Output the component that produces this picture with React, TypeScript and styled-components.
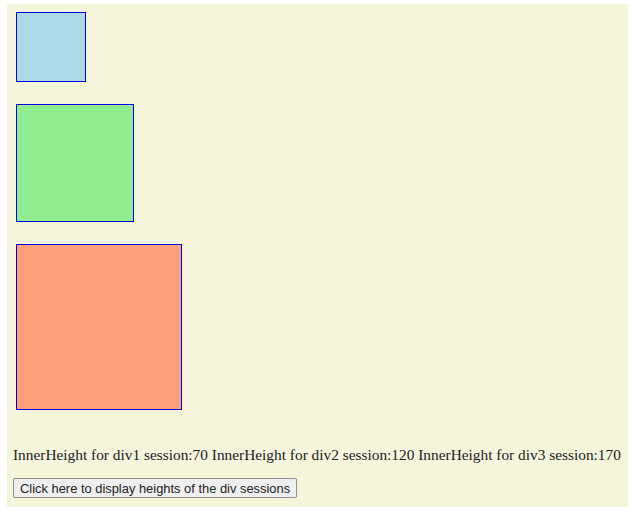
import React from 'react'
import styled, { createGlobalStyle } from 'styled-components'

const GlobalStyle = createGlobalStyle`
  html {
    background-color: #ffffff;
  }

  body {
    background-color: #f5f5dc;
    color: #222222;
    font-family: "Liberation Serif", "Times New Roman", serif;
    margin: 4px 3px 0 7px;
    min-height: 503px;
    padding: 8px 0 0 6px;
    box-sizing: border-box;
  }
`

const Sessions = styled.div`
  display: flex;
  flex-direction: column;
  gap: 22px;
  padding-left: 3px;
`

type TSession = {
  size: number
  color: string
}

const Session = styled.div<TSession>`
  background-color: ${({ color }) => color};
  border: 1px solid #0000ee;
  height: ${({ size }) => size}px;
  width: ${({ size }) => size}px;
`

const Heights = styled.p`
  font-size: 15.37px;
  line-height: 18px;
  margin: 36px 0 14px;
  white-space: nowrap;
`

const Button = styled.button`
  background-color: #efefef;
  border: 1px solid #8f8f8f;
  border-radius: 2px;
  color: #222222;
  font-family: "Liberation Sans", Arial, sans-serif;
  font-size: 12.9px;
  height: 20px;
  padding: 0 6px;
`

const sessions = [
  { color: '#add8e6', size: 68 },
  { color: '#90ee90', size: 116 },
  { color: '#ffa07a', size: 164 },
]

const App = () => (
  <>
    <GlobalStyle />
    <Sessions>
      { sessions.map(({ color, size }) => (
        <Session color={color} key={color} size={size} />
      )) }
    </Sessions>
    <Heights>
      InnerHeight for div1 session:70 InnerHeight for div2 session:120 InnerHeight for div3 session:170
    </Heights>
    <Button>Click here to display heights of the div sessions</Button>
  </>
)

export default App
